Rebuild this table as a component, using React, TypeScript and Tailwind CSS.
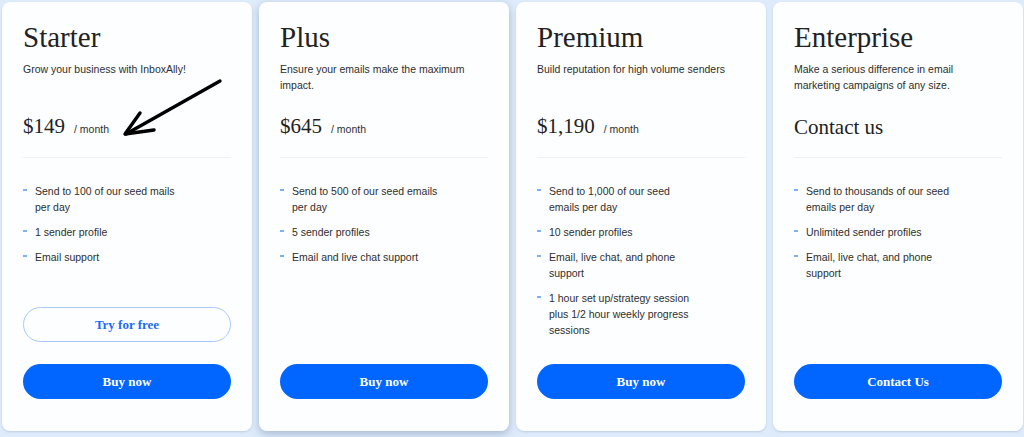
import React from "react";

type Plan = {
  name: string;
  blurb: string;
  price?: string;
  contact?: boolean;
  features: string[];
  trial?: boolean;
  cta: string;
  raised?: boolean;
};

const PLANS: Plan[] = [
  {
    name: "Starter",
    blurb: "Grow your business with InboxAlly!",
    price: "$149",
    features: ["Send to 100 of our seed mails per day", "1 sender profile", "Email support"],
    trial: true,
    cta: "Buy now",
  },
  {
    name: "Plus",
    blurb: "Ensure your emails make the maximum impact.",
    price: "$645",
    features: ["Send to 500 of our seed emails per day", "5 sender profiles", "Email and live chat support"],
    cta: "Buy now",
    raised: true,
  },
  {
    name: "Premium",
    blurb: "Build reputation for high volume senders",
    price: "$1,190",
    features: [
      "Send to 1,000 of our seed emails per day",
      "10 sender profiles",
      "Email, live chat, and phone support",
      "1 hour set up/strategy session plus 1/2 hour weekly progress sessions",
    ],
    cta: "Buy now",
  },
  {
    name: "Enterprise",
    blurb: "Make a serious difference in email marketing campaigns of any size.",
    contact: true,
    features: ["Send to thousands of our seed emails per day", "Unlimited sender profiles", "Email, live chat, and phone support"],
    cta: "Contact Us",
  },
];

const serif = "font-['Liberation_Serif',serif]";
const sans = "font-['Liberation_Sans',sans-serif]";

function Arrow() {
  return (
    <svg className="absolute left-[110px] top-[70px] pointer-events-none" width="120" height="75" viewBox="110 70 120 75">
      <path d="M218 79 L124 132" stroke="#000" strokeWidth="3.4" strokeLinecap="round" fill="none" />
      <path d="M138 111 L123 132 L152 128" stroke="#000" strokeWidth="3.4" strokeLinecap="round" strokeLinejoin="round" fill="none" />
    </svg>
  );
}

function PlanCard({ plan }: { plan: Plan }) {
  return (
    <div
      className={`relative w-[250px] shrink-0 flex flex-col bg-[#fdfeff] rounded-lg px-[21px] pt-[15px] pb-[32px] ${
        plan.raised ? "shadow-[0_3px_8px_rgba(60,90,130,0.35)]" : "shadow-[0_1px_2px_rgba(120,150,190,0.35)]"
      }`}
    >
      <h2 className={`${serif} text-[29px] leading-[40px] text-[#222]`}>{plan.name}</h2>
      <p className={`${sans} text-[10.5px] leading-[16px] text-[#2e2e2e] mt-[4px] h-[32px] pr-[20px]`}>{plan.blurb}</p>
      <div className="h-[48px] flex items-end pb-[1px]">
        {plan.contact ? (
          <span className={`${serif} text-[21px] leading-[28px] text-[#222] relative top-[1px]`}>Contact us</span>
        ) : (
          <div className="flex items-baseline gap-[9px]">
            <span className={`${serif} text-[21px] leading-[28px] text-[#222]`}>{plan.price}</span>
            <span className={`${sans} text-[10.5px] text-[#2e2e2e]`}>/ month</span>
          </div>
        )}
      </div>
      <div className="h-px bg-[#eef2f7] mt-[16px]" />
      <ul className="mt-[25px] flex flex-col gap-[9px] pr-[50px]">
        {plan.features.map((f) => (
          <li key={f} className={`${sans} flex gap-[8px] text-[10.5px] leading-[16px] text-[#2e2e2e]`}>
            <span className="mt-[6px] w-[4px] h-[1.5px] bg-[#7fb0f0] shrink-0" />
            <span>{f}</span>
          </li>
        ))}
      </ul>
      <div className="mt-auto flex flex-col gap-[22px]">
        {plan.trial && (
          <button className={`${serif} h-[35px] w-full rounded-full border border-[#a9c9f7] text-[#1a6cf5] text-[13px] font-bold`}>
            Try for free
          </button>
        )}
        <button className={`${serif} h-[35px] w-full rounded-full bg-[#0066ff] text-white text-[13px] font-bold`}>
          {plan.cta}
        </button>
      </div>
      {plan.trial && <Arrow />}
    </div>
  );
}

export default function App() {
  return (
    <div className="w-[1024px] h-[437px] bg-[#deebfb] pl-[2px] pt-[2px] pb-[6px] flex gap-[7px] overflow-hidden">
      {PLANS.map((p) => (
        <PlanCard key={p.name} plan={p} />
      ))}
    </div>
  );
}
